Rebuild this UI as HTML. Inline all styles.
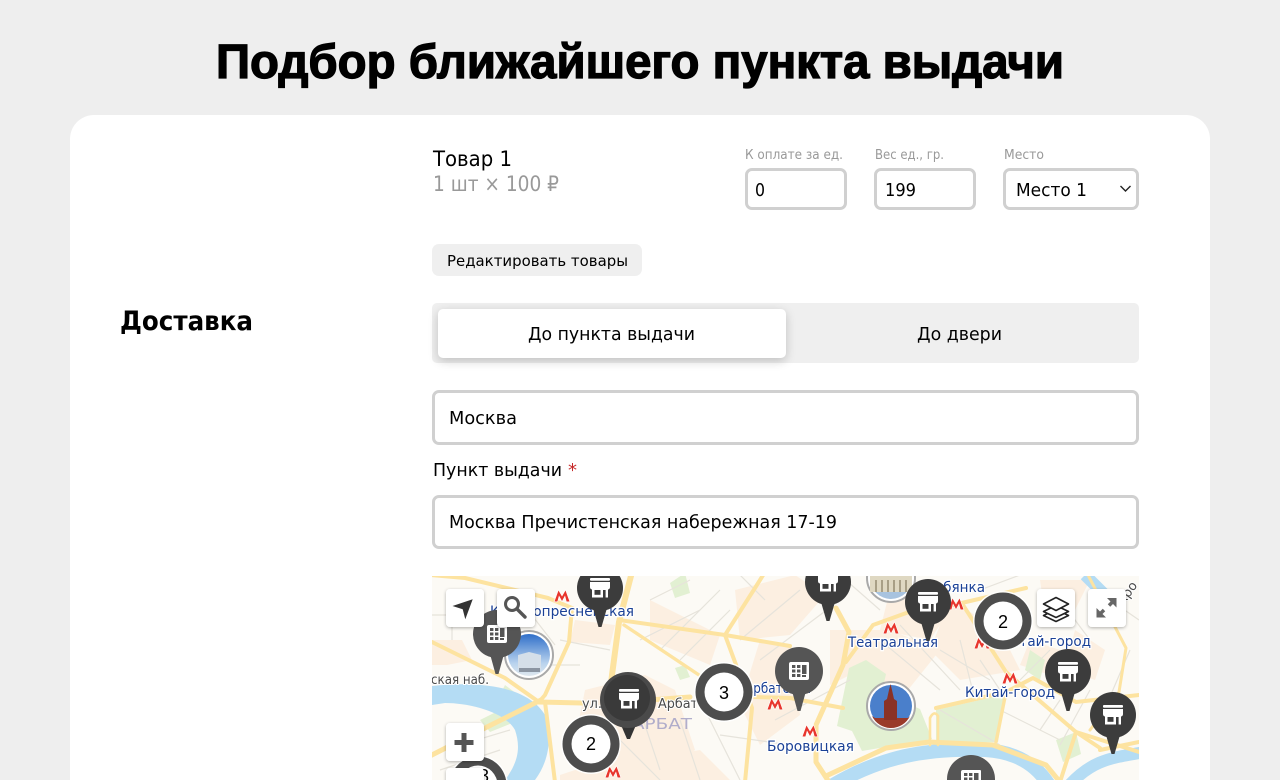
<!DOCTYPE html>
<html lang="ru"><head><meta charset="utf-8"><title>Подбор ближайшего пункта выдачи</title>
<style>
html,body{margin:0;padding:0;width:1280px;height:780px;overflow:hidden;background:#eeeeee}
.b{position:absolute;box-sizing:border-box}
.card{left:70px;top:115px;width:1140px;height:665px;background:#fff;border-radius:24px 24px 0 0}
.inp{background:#fff;border:3px solid #d0d0d0;border-radius:7px}
svg{position:absolute;left:0;top:0}
text{font-family:"DejaVu Sans","Liberation Sans",sans-serif}
</style></head><body>
<div class="b card"></div>
<div class="b inp" style="left:745px;top:168px;width:102px;height:42px"></div>
<div class="b inp" style="left:874px;top:168px;width:102px;height:42px"></div>
<div class="b inp" style="left:1003px;top:168px;width:136px;height:42px"></div>
<div class="b" style="left:432px;top:244px;width:210px;height:32px;background:#efefef;border-radius:7px"></div>
<div class="b" style="left:432px;top:303px;width:707px;height:60px;background:#efefef;border-radius:5px"></div>
<div class="b" style="left:438px;top:309px;width:348px;height:49px;background:#fff;border-radius:5px;box-shadow:0 3px 10px rgba(0,0,0,.2)"></div>
<div class="b inp" style="left:432px;top:390px;width:707px;height:55px"></div>
<div class="b inp" style="left:432px;top:495px;width:707px;height:54px"></div>

<svg width="1280" height="780" viewBox="0 0 1280 780" xmlns="http://www.w3.org/2000/svg">
<defs>
<clipPath id="mc"><rect x="432" y="576" width="707" height="204"/></clipPath>
<linearGradient id="sky" x1="0" y1="0" x2="0" y2="1"><stop offset="0" stop-color="#2f6fc9"/><stop offset=".7" stop-color="#b9d3ee"/><stop offset="1" stop-color="#dfe7ee"/></linearGradient>
<filter id="sh" x="-30%" y="-30%" width="160%" height="160%"><feDropShadow dx="0" dy="1" stdDeviation="1.5" flood-color="#000" flood-opacity=".3"/></filter>
<g id="shop">
 <rect x="-10" y="-10" width="20" height="2.8" rx="1" fill="#fff"/>
 <path d="M-10-6H10V-1Q10 1.5 7.5 1.5H-7.5Q-10 1.5-10-1Z" fill="#fff"/>
 <path d="M-8 0H8V9.5H-8Z" fill="#fff"/>
 <rect x="-5.5" y="2" width="6" height="4.8" fill="#3c3c3c"/>
 <rect x="3" y="2" width="2.6" height="7.5" fill="#3c3c3c"/>
</g>
<g id="grid" fill="#fff">
 <path d="M-10-7Q-10-9-8-9H9Q10-9 10-8V7Q10 9 8 9H-8Q-10 9-10 7Z"/>
 <g fill="#555"><rect x="-7" y="-6" width="3.4" height="3"/><rect x="-2" y="-6" width="3.4" height="3"/>
 <rect x="-7" y="-1.5" width="3.4" height="3"/><rect x="-2" y="-1.5" width="3.4" height="3"/>
 <rect x="-7" y="3" width="3.4" height="3"/><rect x="-2" y="3" width="3.4" height="3"/>
 <rect x="3" y="-6" width="4.5" height="9"/><rect x="3" y="4" width="4" height="2"/></g>
</g>
<g id="pinS"><path d="M-7 20L-1.5 39H1.5L7 20Z" fill="#3c3c3c"/><circle r="23" fill="#3c3c3c"/><use href="#shop"/></g>
<g id="pinG"><path d="M-7 20L-1.5 40H1.5L7 20Z" fill="#555"/><circle r="24" fill="#555"/><use href="#grid"/></g>
<g id="metro"><path d="M-7.5 5.5L-3.5-5.5 0 0.5 3.5-5.5 7.5 5.5H4.6L3-0.5 0 5-3-0.5-4.6 5.5Z" fill="#e8352c" stroke="#fff" stroke-width="1.2" paint-order="stroke"/></g>
<g id="clu"><circle r="30" fill="#fff" opacity=".9"/><circle r="28.5" fill="#4d4d4d"/><circle r="19.5" fill="#fff"/></g>
<g id="ctl"><rect width="38" height="38" rx="4" fill="#fff" filter="url(#sh)"/></g>
</defs>

<!-- text -->
<g fill="#000">
<text x="216" y="78" font-size="48" font-weight="700" stroke="#000" stroke-width="1.3" textLength="848" lengthAdjust="spacingAndGlyphs" style="font-family:'Liberation Sans',sans-serif">Подбор ближайшего пункта выдачи</text>
<text x="120" y="330" font-size="27" font-weight="700" textLength="133" lengthAdjust="spacingAndGlyphs">Доставка</text>
<text x="433" y="166" font-size="21" textLength="79" lengthAdjust="spacingAndGlyphs">Товар 1</text>
<text x="433" y="191" font-size="21" fill="#999" textLength="126" lengthAdjust="spacingAndGlyphs">1 шт × 100 ₽</text>
<text x="745" y="159" font-size="13" fill="#999" textLength="98" lengthAdjust="spacingAndGlyphs">К оплате за ед.</text>
<text x="875" y="159" font-size="13" fill="#999" textLength="69" lengthAdjust="spacingAndGlyphs">Вес ед., гр.</text>
<text x="1004" y="159" font-size="13" fill="#999" textLength="40" lengthAdjust="spacingAndGlyphs">Место</text>
<text x="755" y="196" font-size="18" textLength="10" lengthAdjust="spacingAndGlyphs">0</text>
<text x="885" y="196" font-size="18" textLength="31" lengthAdjust="spacingAndGlyphs">199</text>
<text x="1016" y="196" font-size="18" textLength="71" lengthAdjust="spacingAndGlyphs">Место 1</text>
<text x="447" y="266" font-size="15.5" textLength="181" lengthAdjust="spacingAndGlyphs">Редактировать товары</text>
<text x="528" y="340" font-size="18" textLength="167" lengthAdjust="spacingAndGlyphs">До пункта выдачи</text>
<text x="917" y="340" font-size="18" textLength="85" lengthAdjust="spacingAndGlyphs">До двери</text>
<text x="449" y="424" font-size="18" textLength="68" lengthAdjust="spacingAndGlyphs">Москва</text>
<text x="433" y="476" font-size="18" textLength="129" lengthAdjust="spacingAndGlyphs">Пункт выдачи</text>
<text x="568" y="476" font-size="18" fill="#c62828">*</text>
<text x="449" y="528" font-size="18" textLength="388" lengthAdjust="spacingAndGlyphs">Москва Пречистенская набережная 17-19</text>
</g>
<path d="M1120.5 186l5 5 5-5" fill="none" stroke="#222" stroke-width="1.4"/>

<!-- map -->
<g clip-path="url(#mc)">
<rect x="432" y="576" width="707" height="204" fill="#fcfaf5"/>
<!-- peach blocks -->
<g fill="#fcefe1">
<path d="M432 640h30l10 20-25 5h-15zM575 620l40 5-5 20-40-3zM585 690l60-15 30 15 20 60-40 30h-70l-10-40zM650 600l70 35-10 30-60-25z"/>
<path d="M735 590l60-15 30 20-35 40-50 5zM760 640l30 5 10 70-40 30-20-40zM830 630l60 0 50 20-40 50-40-30-30 15zM890 590l60 20-20 30-50-10z"/>
<path d="M950 600l50 30 20 40-60 10-30-30zM1040 580l50 0-15 30-30 5zM640 760l60-10 30 30h-90zM560 775l60-20 10 25h-70z"/>
<path d="M1075 630l30 20-10 30-30-10zM1030 640l30 10-10 25-30-10z"/>
</g>
<!-- greens -->
<g fill="#e2f0d2">
<path d="M849 668l17-8 20 14-4 18 38 17 12 30-70 12-10-20-15-5z"/>
<path d="M936 710l70-16-8 48-62 2z"/>
<path d="M480 720l20-10 20 10-30 12zM670 583l15-10 5 20-15 5zM505 685l20 15-10 15-15-20z"/>
<path d="M1056 740l20-8 5 22-18 8zM1030 650l15 10-5 20-15-10zM675 668l10-3 5 12-10 3zM520 745l10-3 2 15-10 3z"/>
</g>
<!-- water -->
<path d="M432 686C490 680 530 690 545 715C552 735 550 760 535 780H505C520 760 520 745 515 730C505 712 470 703 445 703L432 705Z" fill="#b4dcf4"/>
<g fill="none" stroke="#b4dcf4" stroke-linecap="butt">
<path d="M825 790C880 755 930 748 985 750C1020 752 1040 768 1052 790" stroke-width="14"/>
<path d="M1065 790C1090 760 1110 758 1145 752" stroke-width="12"/>
<path d="M1085 575L1105 595" stroke-width="12"/>
</g>
<!-- minor streets -->
<g fill="none" stroke="#e6e3db" stroke-width="1.2">
<path d="M432 615H475M452 590V640M520 600L555 645M520 665H580M560 640L610 650M640 640L700 610M650 600L690 580M660 650L720 590M680 660L730 610M700 700L740 780M680 720L700 780M620 740L660 780M590 600L620 570M640 710L660 770M460 745L510 730M440 770L500 750"/>
<path d="M740 640L800 590M760 660L840 600M775 720L850 680M880 640L940 690M900 625L960 690M940 650L990 680M960 640L975 700M980 660L1000 690M1020 680L1050 650M1060 700L1040 730M1090 690L1060 745M1100 720L1130 650M1110 600L1139 620M1000 710L1060 740M880 700L910 720M940 710L1000 745M840 575L880 610M980 590L1020 575M720 735L790 745M765 600L740 575M1060 600L1090 640"/>
</g>
<!-- roads -->
<g fill="none" stroke="#fde3a0" stroke-width="3.4" stroke-linejoin="round" stroke-linecap="round">
<path d="M632 572L619 622L612 675L609 702" stroke-width="6"/>
<path d="M572 608L569 642L545 695L539 702" stroke-width="4"/>
<path d="M539 702L582 703M650 700L690 697" stroke-width="5"/>
<path d="M541 700L485 728L430 756" stroke-width="5"/>
<path d="M619 620L725 635L790 646" stroke-width="4"/>
<path d="M624 625L699 675"/>
<path d="M725 635L755 588L765 572" stroke-width="4"/>
<path d="M725 635L752 708L745 782" stroke-width="4"/>
<path d="M539 702L505 678L432 642" stroke-width="4"/>
<path d="M430 575L465 578L548 598L572 608" stroke-width="4"/>
<path d="M545 702L555 782" stroke-width="4"/>
<path d="M752 697L790 698L843 708" stroke-width="4"/>
<path d="M846 662L873 625L909 612L953 605L1026 588" stroke-width="4"/>
<path d="M963 605L1006 672L1076 732L1100 748" stroke-width="4"/>
<path d="M836 608L849 632L843 665L816 725L816 762L829 782" stroke-width="5"/>
<path d="M936 708L1006 692L1033 678L1076 702L1139 695" stroke-width="4"/>
<path d="M1006 692L996 742"/>
<path d="M930 718V745M938 716V745M930 718Q934 710 938 716" stroke-width="2.6"/>
<path d="M826 776L886 748L929 742L993 745L1046 765L1060 782" stroke-width="5"/>
<path d="M1088 575L1126 648L1119 692L1090 730" stroke-width="3"/>
<path d="M1076 732L1139 752" stroke-width="4"/>
<path d="M1076 732L1060 782" stroke-width="4"/>
<path d="M1100 750L1139 742" stroke-width="4"/>
</g>
<!-- labels -->
<g font-size="14.5" fill="#1b4196" stroke="#fff" stroke-width="2.5" paint-order="stroke">
<text x="490" y="616" textLength="144" lengthAdjust="spacingAndGlyphs">Краснопресненская</text>
<text x="848" y="647" textLength="90" lengthAdjust="spacingAndGlyphs">Театральная</text>
<text x="965" y="697" textLength="90" lengthAdjust="spacingAndGlyphs">Китай-город</text>
<text x="1001" y="646" textLength="90" lengthAdjust="spacingAndGlyphs">Китай-город</text>
<text x="767" y="751" textLength="87" lengthAdjust="spacingAndGlyphs">Боровицкая</text>
<text x="745" y="693" textLength="66" lengthAdjust="spacingAndGlyphs">Арбатская</text>
<text x="925" y="592" textLength="60" lengthAdjust="spacingAndGlyphs">Лубянка</text>
</g>
<g font-size="13" fill="#4a4a4a" stroke="#fff" stroke-width="2" paint-order="stroke">
<text x="431" y="684" textLength="58" lengthAdjust="spacingAndGlyphs">ская наб.</text>
<text x="582" y="708" textLength="20" lengthAdjust="spacingAndGlyphs">ул.</text>
<text x="658" y="708" textLength="40" lengthAdjust="spacingAndGlyphs">Арбат</text>
<text x="1124" y="605" transform="rotate(-55 1124 605)" textLength="24" lengthAdjust="spacingAndGlyphs">кро</text>
</g>
<text x="632" y="729" font-size="15.5" fill="#a9a6c8" textLength="60" lengthAdjust="spacingAndGlyphs" opacity=".9">АРБАТ</text>
<!-- metro -->
<use href="#metro" x="562" y="596"/><use href="#metro" x="775" y="704"/><use href="#metro" x="810" y="731"/><use href="#metro" x="891" y="628"/>
<use href="#metro" x="956" y="604"/><use href="#metro" x="1010" y="678"/><use href="#metro" x="613" y="772"/><use href="#metro" x="982" y="643"/>
<!-- photo circles -->
<g><circle cx="529" cy="655" r="24" fill="#fff" stroke="#a9a9a9" stroke-width="2"/><circle cx="529" cy="655" r="21" fill="url(#sky)"/><path d="M518 669V655L529 652 541 655V669Z" fill="#d5dfe9"/><rect x="519" y="668" width="21" height="4" fill="#8b95a2"/></g>
<g><circle cx="891" cy="706" r="24" fill="#fff" stroke="#a9a9a9" stroke-width="2"/><circle cx="891" cy="706" r="21" fill="#4a7fcb"/><path d="M875 718H908L910 716A21 21 0 0 1 872 716Z" fill="#9a3a2a"/><path d="M884 720V701L887 699 889 690 890.5 684 892 690 894 699 897 701V720Z" fill="#8a3226"/></g>
<g><circle cx="891" cy="578" r="24" fill="#fff" stroke="#a9a9a9" stroke-width="2"/><circle cx="891" cy="578" r="21" fill="#a8c3df"/><path d="M870 574H912V592H870Z" fill="#dfd8c2"/><path d="M875 580h2v12h-2zM881 580h2v12h-2zM887 580h2v12h-2zM893 580h2v12h-2zM899 580h2v12h-2zM905 580h2v12h-2z" fill="#a89f86"/></g>
<!-- markers -->
<use href="#pinS" x="600" y="588"/>
<use href="#pinS" x="828" y="582"/>
<use href="#pinS" x="928" y="602"/>
<use href="#pinS" x="1068" y="672"/>
<use href="#pinS" x="1113" y="715"/>
<use href="#pinG" x="497" y="634"/>
<use href="#pinG" x="799" y="671"/>
<use href="#pinG" x="971" y="779"/>
<use href="#clu" x="591" y="744"/><use href="#clu" x="724" y="692"/><use href="#clu" x="1003" y="621"/><use href="#clu" x="478" y="785"/>
<g font-size="18" fill="#000" text-anchor="middle">
<text x="591" y="750" style="font-family:'Liberation Sans',sans-serif">2</text><text x="724" y="699" style="font-family:'Liberation Sans',sans-serif">3</text><text x="1003" y="628" style="font-family:'Liberation Sans',sans-serif">2</text><text x="484" y="782" style="font-family:'Liberation Sans',sans-serif">3</text>
</g>
<!-- big selected pin -->
<path d="M621 725L627 739H630L636 725Z" fill="#333"/>
<circle cx="628" cy="700" r="28" fill="#4a4a4a"/><circle cx="627" cy="698" r="23" fill="#3a3a3a"/>
<use href="#shop" x="629" y="699"/>
<!-- controls -->
<use href="#ctl" x="446" y="589"/><use href="#ctl" x="497" y="589"/><use href="#ctl" x="1037" y="589"/><use href="#ctl" x="1088" y="589"/><use href="#ctl" x="446" y="723"/><use href="#ctl" x="446" y="768"/>
<path d="M452.5 606L472.7 599.3 465.3 619.3 462.7 609.3Z" fill="#333"/>
<circle cx="512" cy="604" r="6.5" fill="none" stroke="#555" stroke-width="3"/><path d="M517 609L525 617" stroke="#555" stroke-width="3.4" stroke-linecap="round"/>
<path d="M461.5 733h5v7h7v5h-7v7h-5v-7h-7v-5h7z" fill="#555"/>
<g fill="#fff" stroke="#222" stroke-width="1.6" stroke-linejoin="round"><path d="M1056 609.5l-12.5 6 12.5 6 12.5-6z"/><path d="M1056 605.5l-12.5 6 12.5 6 12.5-6z"/><path d="M1056 597.5l-12.5 6.5 12.5 6.5 12.5-6.5z"/></g>
<path d="M1096.5 608v9.5h9.5zM1116.5 598h-9.5l9.5 9.5z" fill="#666"/>
<path d="M1099 615L1104 610M1114 600.5L1109 605.5" stroke="#666" stroke-width="3.5"/>
</g>
</svg>
</body></html>
